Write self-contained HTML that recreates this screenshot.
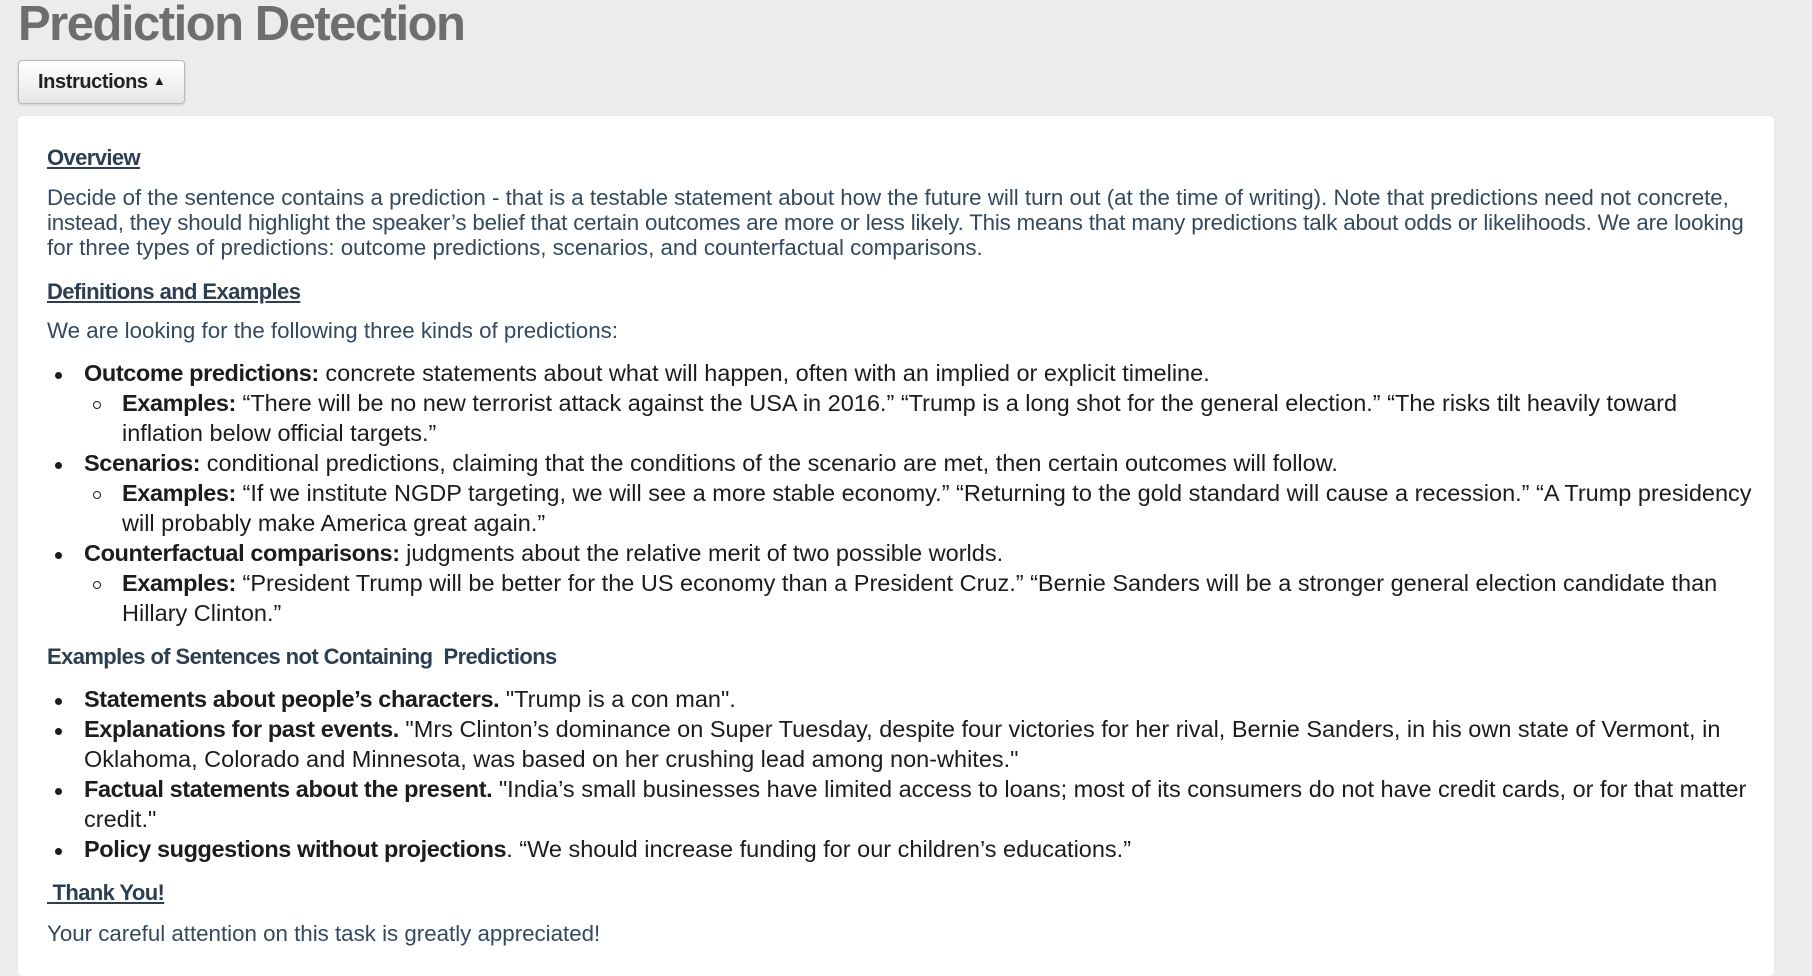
<!DOCTYPE html>
<html><head><meta charset="utf-8"><style>
html,body{margin:0;padding:0}
body{width:1812px;height:962px;overflow:hidden;background:#ececec;font-family:"Liberation Sans",sans-serif;position:relative}
h1{position:absolute;left:18px;top:-4px;margin:0;font-size:49px;font-weight:bold;color:#6e6e6e;letter-spacing:-1.5px;white-space:nowrap}
.btn{position:absolute;left:18px;top:60px;width:167px;height:44px;box-sizing:border-box;border:1px solid #b8b8b8;border-radius:4px;background:linear-gradient(#fff,#e6e6e6);font-size:20px;font-weight:bold;color:#222;line-height:42px;padding-left:19px;letter-spacing:-0.4px;box-shadow:0 1px 2px rgba(0,0,0,.15)}
.panel{position:absolute;left:18px;top:116px;width:1756px;height:860px;background:#fff;border-radius:5px}
.t{position:absolute;white-space:nowrap;font-size:22.3px;letter-spacing:0;color:#34495e}
.h{font-weight:bold;text-decoration:underline;color:#2c3e50;letter-spacing:-0.6px;font-size:22px}
.b{color:#1c1c1c;font-size:23.5px;letter-spacing:0}
.b b{font-weight:bold;letter-spacing:-0.4px}
.dot{position:absolute;width:7px;height:7px;border-radius:50%;background:#1c1c1c}
.cir{position:absolute;width:6px;height:6px;border-radius:50%;border:1.5px solid #1c1c1c}
</style></head><body>
<h1>Prediction Detection</h1>
<div class="btn">Instructions <span style="font-size:13px;position:relative;top:-3px">▲</span></div>
<div class="panel"></div>
<div class="t h" style="left:47px;top:145px">Overview</div>
<div class="t" style="left:47px;top:185px">Decide of the sentence contains a prediction - that is a testable statement about how the future will turn out (at the time of writing). Note that predictions need not concrete,</div>
<div class="t" style="left:47px;top:210px;letter-spacing:-0.17px">instead, they should highlight the speaker’s belief that certain outcomes are more or less likely. This means that many predictions talk about odds or likelihoods. We are looking</div>
<div class="t" style="left:47px;top:235px">for three types of predictions: outcome predictions, scenarios, and counterfactual comparisons.</div>
<div class="t h" style="left:47px;top:279px">Definitions and Examples</div>
<div class="t" style="left:47px;top:318px">We are looking for the following three kinds of predictions:</div>

<div class="dot" style="left:55px;top:372px"></div>
<div class="t b" style="left:84px;top:360px"><b>Outcome predictions:</b> concrete statements about what will happen, often with an implied or explicit timeline.</div>
<div class="cir" style="left:93px;top:401px"></div>
<div class="t b" style="left:122px;top:390px"><b>Examples:</b> “There will be no new terrorist attack against the USA in 2016.” “Trump is a long shot for the general election.” “The risks tilt heavily toward</div>
<div class="t b" style="left:122px;top:420px">inflation below official targets.”</div>
<div class="dot" style="left:55px;top:462px"></div>
<div class="t b" style="left:84px;top:450px"><b>Scenarios:</b> conditional predictions, claiming that the conditions of the scenario are met, then certain outcomes will follow.</div>
<div class="cir" style="left:93px;top:491px"></div>
<div class="t b" style="left:122px;top:480px"><b>Examples:</b> “If we institute NGDP targeting, we will see a more stable economy.” “Returning to the gold standard will cause a recession.” “A Trump presidency</div>
<div class="t b" style="left:122px;top:510px">will probably make America great again.”</div>
<div class="dot" style="left:55px;top:552px"></div>
<div class="t b" style="left:84px;top:540px"><b>Counterfactual comparisons:</b> judgments about the relative merit of two possible worlds.</div>
<div class="cir" style="left:93px;top:581px"></div>
<div class="t b" style="left:122px;top:570px"><b>Examples:</b> “President Trump will be better for the US economy than a President Cruz.” “Bernie Sanders will be a stronger general election candidate than</div>
<div class="t b" style="left:122px;top:600px">Hillary Clinton.”</div>

<div class="t" style="left:47px;top:644px;font-weight:bold;color:#2c3e50;font-size:22px;letter-spacing:-0.6px">Examples of Sentences not Containing&nbsp; Predictions</div>
<div class="dot" style="left:55px;top:698px"></div>
<div class="t b" style="left:84px;top:686px"><b>Statements about people’s characters.</b> "Trump is a con man".</div>
<div class="dot" style="left:55px;top:728px"></div>
<div class="t b" style="left:84px;top:716px"><b>Explanations for past events.</b> "Mrs Clinton’s dominance on Super Tuesday, despite four victories for her rival, Bernie Sanders, in his own state of Vermont, in</div>
<div class="t b" style="left:84px;top:746px">Oklahoma, Colorado and Minnesota, was based on her crushing lead among non-whites."</div>
<div class="dot" style="left:55px;top:788px"></div>
<div class="t b" style="left:84px;top:776px"><b>Factual statements about the present.</b> "India’s small businesses have limited access to loans; most of its consumers do not have credit cards, or for that matter</div>
<div class="t b" style="left:84px;top:806px">credit."</div>
<div class="dot" style="left:55px;top:848px"></div>
<div class="t b" style="left:84px;top:836px"><b>Policy suggestions without projections</b>. “We should increase funding for our children’s educations.”</div>
<div class="t h" style="left:47px;top:880px">&nbsp;Thank You!</div>
<div class="t" style="left:47px;top:921px">Your careful attention on this task is greatly appreciated!</div>
</body></html>
